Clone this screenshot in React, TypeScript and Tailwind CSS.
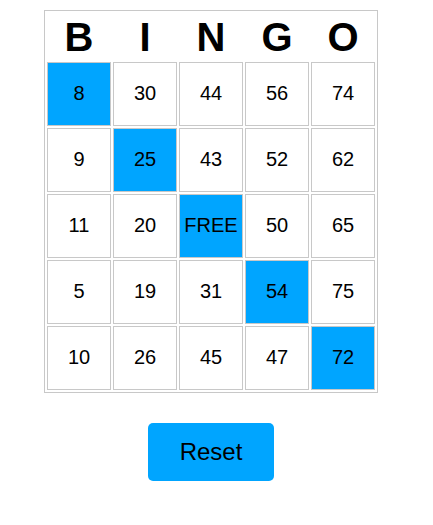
import { useState } from "react";

const letters = ["B", "I", "N", "G", "O"];

const initialBoard: (number | "FREE")[][] = [
  [8, 30, 44, 56, 74],
  [9, 25, 43, 52, 62],
  [11, 20, "FREE", 50, 65],
  [5, 19, 31, 54, 75],
  [10, 26, 45, 47, 72],
];

const initialMarked = () =>
  initialBoard.map((row, r) => row.map((_, c) => r === c));

export default function App() {
  const [marked, setMarked] = useState<boolean[][]>(initialMarked);

  const toggle = (r: number, c: number) => {
    setMarked((prev) =>
      prev.map((row, ri) => row.map((m, ci) => (ri === r && ci === c ? !m : m)))
    );
  };

  const reset = () => setMarked(initialMarked());

  return (
    <div
      className="w-[422px] flex flex-col items-center pt-[10px] bg-white text-black"
      style={{ fontFamily: '"Liberation Sans", Arial, sans-serif' }}
    >
      <div className="border border-[#c8c8c8] p-[2px] w-[334px]">
        <div className="grid grid-cols-5 gap-x-[2px]">
          {letters.map((l) => (
            <div
              key={l}
              className="h-[47px] flex items-center justify-center text-[40px] font-bold leading-none"
            >
              {l}
            </div>
          ))}
        </div>
        <div className="grid grid-cols-5 gap-[2px] mt-[2px]">
          {initialBoard.map((row, r) =>
            row.map((v, c) => (
              <button
                key={`${r}-${c}`}
                onClick={() => toggle(r, c)}
                className={`h-[64px] w-[64px] border border-[#c8c8c8] flex items-center justify-center text-[20px] pb-[2px] ${
                  marked[r][c] ? "bg-[#00a5ff]" : "bg-white"
                }`}
              >
                {v}
              </button>
            ))
          )}
        </div>
      </div>
      <button
        onClick={reset}
        className="mt-[30px] w-[126px] h-[58px] rounded-[5px] bg-[#00a5ff] text-[24px]"
      >
        Reset
      </button>
    </div>
  );
}
